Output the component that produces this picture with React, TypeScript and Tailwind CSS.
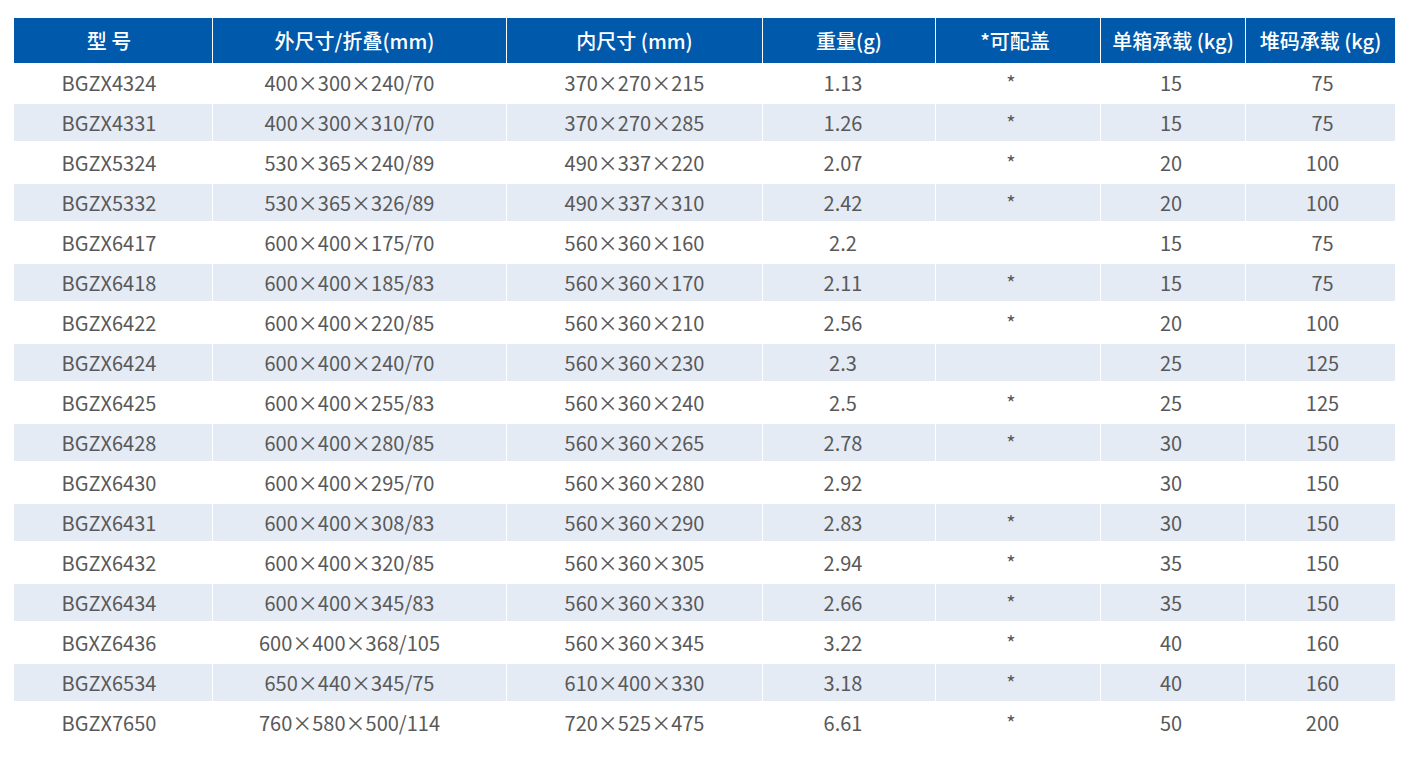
import React from 'react';

const cols = [
  { label: '型 号', w: 'w-[198px]', h: 'pr-[8px]', b: 'pr-[8px]' },
  { label: '外尺寸/折叠(mm)', w: 'w-[294px]', h: 'pr-[10px]', b: 'pr-[20px]' },
  { label: '内尺寸 (mm)', w: 'w-[256px]', h: '', b: '' },
  { label: '重量(g)', w: 'w-[173px]', h: '', b: 'pr-[12px]' },
  { label: '*可配盖', w: 'w-[165px]', h: 'pr-[6px]', b: 'pr-[14px]' },
  { label: '单箱承载 (kg)', w: 'w-[145px]', h: '', b: 'pr-[4px]' },
  { label: '堆码承载 (kg)', w: 'w-[150px]', h: '', b: 'pl-[4px]' },
];

const rows: string[][] = [
  ['BGZX4324', '400×300×240/70', '370×270×215', '1.13', '*', '15', '75'],
  ['BGZX4331', '400×300×310/70', '370×270×285', '1.26', '*', '15', '75'],
  ['BGZX5324', '530×365×240/89', '490×337×220', '2.07', '*', '20', '100'],
  ['BGZX5332', '530×365×326/89', '490×337×310', '2.42', '*', '20', '100'],
  ['BGZX6417', '600×400×175/70', '560×360×160', '2.2', '', '15', '75'],
  ['BGZX6418', '600×400×185/83', '560×360×170', '2.11', '*', '15', '75'],
  ['BGZX6422', '600×400×220/85', '560×360×210', '2.56', '*', '20', '100'],
  ['BGZX6424', '600×400×240/70', '560×360×230', '2.3', '', '25', '125'],
  ['BGZX6425', '600×400×255/83', '560×360×240', '2.5', '*', '25', '125'],
  ['BGZX6428', '600×400×280/85', '560×360×265', '2.78', '*', '30', '150'],
  ['BGZX6430', '600×400×295/70', '560×360×280', '2.92', '', '30', '150'],
  ['BGZX6431', '600×400×308/83', '560×360×290', '2.83', '*', '30', '150'],
  ['BGZX6432', '600×400×320/85', '560×360×305', '2.94', '*', '35', '150'],
  ['BGZX6434', '600×400×345/83', '560×360×330', '2.66', '*', '35', '150'],
  ['BGXZ6436', '600×400×368/105', '560×360×345', '3.22', '*', '40', '160'],
  ['BGZX6534', '650×440×345/75', '610×400×330', '3.18', '*', '40', '160'],
  ['BGZX7650', '760×580×500/114', '720×525×475', '6.61', '*', '50', '200'],
];

export default function App() {
  return (
    <div
      className="bg-white w-[1409px] h-[759px] pt-[18px] px-[14px]"
      style={{ fontFamily: '"Noto Sans CJK SC", "Noto Sans", sans-serif' }}
    >
      <div className="flex h-[45px] bg-[#0059aa]">
        {cols.map((c, i) => (
          <div
            key={c.label}
            className={`${c.w} ${c.h} flex items-center justify-center text-white font-medium text-[20px] whitespace-nowrap ${
              i > 0 ? 'border-l border-white' : ''
            }`}
          >
            {c.label}
          </div>
        ))}
      </div>
      {rows.map((r, ri) => (
        <div key={r[0]} className="h-[40px] pt-[1px] pb-[2px]">
          <div className={`flex h-full ${ri % 2 === 1 ? 'bg-[#e4ebf5]' : 'bg-white'}`}>
            {r.map((v, i) => (
              <div
                key={i}
                className={`${cols[i].w} ${cols[i].b} flex items-center justify-center text-[20px] text-[#595959] ${
                  i > 0 ? 'border-l border-white' : ''
                }`}
              >
                {v}
              </div>
            ))}
          </div>
        </div>
      ))}
    </div>
  );
}
